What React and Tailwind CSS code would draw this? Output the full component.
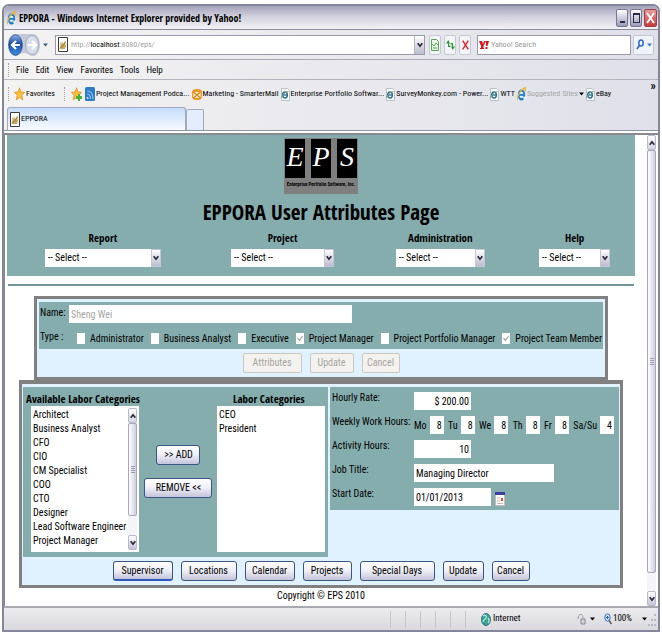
import React from "react";

const BODY = "font-['Roboto_Condensed','Roboto','Liberation_Sans',sans-serif]";
const BOLD = "font-['Open_Sans_Condensed','Roboto_Condensed','Liberation_Sans',sans-serif] font-bold";
const BUTTON_ON =
  "h-[20px] shrink-0 rounded-[3px] border border-[#3c5585] bg-gradient-to-b from-white via-[#eeeef6] to-[#c4c4da] text-center leading-4";
const BUTTON_OFF =
  "h-[20px] shrink-0 rounded-[2px] border border-[#cbc8bf] bg-[#f3f2ef] text-center leading-4 text-[#a5a5a0]";
const FIELD = "h-[18px] bg-white px-[2px]";

/* ---------- icons ---------- */

function IeLogo({ width = 9, height = 14 }) {
  return (
    <svg width={width} height={height} viewBox="0 0 16 16" preserveAspectRatio="none" className="shrink-0" aria-hidden="true">
      <circle cx="8" cy="9" r="5" fill="#e8f4fd" stroke="#1f7fd0" strokeWidth="3" />
      <path d="M4 9h9" stroke="#1f7fd0" strokeWidth="2.2" />
      <path d="M10 11h6v2l-4 1z" fill="#fff" opacity=".8" />
      <path d="M1.500 15C-1 11 7 2 15 1c1 1 0 3-1 4" fill="none" stroke="#e8b92c" strokeWidth="1.800" />
    </svg>
  );
}

function IePage() {
  return (
    <svg width="9" height="13" viewBox="0 0 9 13" className="shrink-0" aria-hidden="true">
      <path d="M.5.5h6l2 2v10h-8z" fill="#fff" stroke="#b9bfcb" />
      <ellipse cx="4" cy="7" rx="2.300" ry="3" fill="none" stroke="#2c6f9c" strokeWidth="1.500" />
      <path d="M2 7h4.500" stroke="#2c6f9c" strokeWidth="1.300" />
      <path d="M.8 10C1 7 4 4 7.500 3.500" fill="none" stroke="#6fa052" />
    </svg>
  );
}

function PageIcon() {
  return (
    <svg width="10" height="15" viewBox="0 0 10 15" className="shrink-0" aria-hidden="true">
      <path d="M.5.5h9v14h-9z" fill="#fff" stroke="#3c3c3c" />
      <path d="M1.500 12l1-4-.5-3 1.500 2 .5-3 1 3 3-4-1 5 1.500-1-1.500 5z" fill="#c9a55e" />
      <path d="M2.500 11l3-3 2-3" stroke="#8a6b33" fill="none" strokeWidth=".8" />
    </svg>
  );
}

function Star({ add }) {
  return (
    <svg width="11" height="14" viewBox="0 0 11 14" className="shrink-0" aria-hidden="true">
      <path d="M5.500.8l1.400 4.200 3.600.3-2.700 3 .9 4.600-3.200-2.600L2.300 12.900l.9-4.600-2.700-3L4.100 5z" fill="#fcc23a" stroke="#e48a1c" strokeWidth=".8" />
      {add && <path d="M5 9h2V7h2v2h2v3H9v2H7v-2H5z" fill="#47b13a" />}
    </svg>
  );
}

function PodcastIcon() {
  return (
    <svg width="10" height="14" viewBox="0 0 10 14" className="shrink-0" aria-hidden="true">
      <rect width="10" height="14" rx="1.500" fill="#2f7cc6" />
      <path d="M2 4c4 0 6 3 6 8M2 7c2.500 0 3.500 2 3.500 5" stroke="#8fc4ee" strokeWidth="1.200" fill="none" />
      <circle cx="2.600" cy="11" r="1" fill="#cfe6fa" />
    </svg>
  );
}

function MailIcon() {
  return (
    <svg width="10" height="13" viewBox="0 0 10 13" className="shrink-0" aria-hidden="true">
      <rect y="1" width="10" height="11" rx="4" fill="#f09a1e" />
      <path d="M1.500 4h7v6h-7z" fill="#fff3da" />
      <path d="M1.500 4L8.500 10M8.500 4L1.500 10" stroke="#d67d12" strokeWidth="1.200" />
    </svg>
  );
}

function Chevron({ up }) {
  return (
    <svg width="6" height="6" viewBox="0 0 6 6" className={up ? "rotate-180" : ""} aria-hidden="true">
      <path d="M.7 1.200L3 4.200 5.300 1.200" stroke="#2a2a3a" strokeWidth="1.700" fill="none" />
    </svg>
  );
}

function Caret({ className = "text-black" }) {
  return (
    <svg width="5" height="4" viewBox="0 0 5 4" className={`shrink-0 ${className}`} aria-hidden="true">
      <path d="M0 .5h5L2.500 3.500z" fill="currentColor" />
    </svg>
  );
}

function NavArrows() {
  return (
    <svg width="32" height="24" viewBox="0 0 32 24" aria-hidden="true">
      <defs>
        <linearGradient id="back" x1="0" y1="0" x2="0" y2="1">
          <stop offset="0" stopColor="#8fb4e8" />
          <stop offset=".45" stopColor="#1d4fa8" />
          <stop offset="1" stopColor="#3f8fe0" />
        </linearGradient>
      </defs>
      <path d="M7 1h18c4 0 7 5 7 11s-3 11-7 11c-4 0-5-3-9-3s-5 3-9 3S0 18 0 12 3 1 7 1z" fill="#c3c9d8" />
      <ellipse cx="7.500" cy="12" rx="6.800" ry="10.300" fill="url(#back)" stroke="#1b3f7c" strokeWidth=".7" />
      <path d="M8 8l-4 4 4 4M4.500 12H12" stroke="#fff" strokeWidth="2.200" fill="none" />
      <ellipse cx="24" cy="12" rx="6.500" ry="9.500" fill="#d9dfea" stroke="#98a3ba" strokeWidth=".8" />
      <path d="M24 8l4 4-4 4M27.500 12H20" stroke="#fff" strokeWidth="2.200" fill="none" />
    </svg>
  );
}

/* ---------- browser frame ---------- */

function TitleBar() {
  return (
    <header className="flex h-[23px] items-center gap-[3px] rounded-t-[5px] bg-gradient-to-b from-[#a5a3bb] via-[#d5d4df] to-[#f2f2f6] pl-[3px] pr-px">
      <IeLogo />
      <h1 className={`${BOLD} flex-1 text-[10px] leading-4`}>EPPORA - Windows Internet Explorer provided by Yahoo!</h1>
      <div className="flex gap-[2px]">
        <button aria-label="Minimize" className="flex h-[18px] w-[12px] items-end justify-center rounded-[2px] border border-[#777795] bg-gradient-to-b from-white to-[#9c9cba] pb-[3px]">
          <span className="h-[2px] w-[5px] bg-[#2b2b48]" />
        </button>
        <button aria-label="Maximize" className="flex h-[18px] w-[12px] items-center justify-center rounded-[2px] border border-[#777795] bg-gradient-to-b from-white to-[#9c9cba]">
          <span className="h-[10px] w-[7px] border border-t-2 border-[#2b2b48]" />
        </button>
        <button aria-label="Close" className="flex h-[18px] w-[13px] items-center justify-center rounded-[2px] border border-[#a04048] bg-gradient-to-b from-[#e59a98] to-[#c8393c]">
          <svg width="9" height="12" viewBox="0 0 9 12" aria-hidden="true">
            <path d="M1 1l7 10M8 1L1 11" stroke="#fff" strokeWidth="1.800" />
          </svg>
        </button>
      </div>
    </header>
  );
}

function ToolButton({ label, children }) {
  return (
    <button aria-label={label} className="flex h-[20px] w-[12px] items-center justify-center rounded-[2px] border border-[#c5c8d2] bg-[#f3f4f8]">
      {children}
    </button>
  );
}

function AddressBar() {
  return (
    <div className="flex h-[30px] items-center border-t border-[#8b8b9b] bg-gradient-to-r from-[#f3f3f2] to-[#e0e0ea] px-[4px]">
      <button aria-label="Back and forward">
        <NavArrows />
      </button>
      <Caret className="ml-[3px] text-[#2f5f7c]" />
      <div className="ml-[7px] flex h-[20px] min-w-0 flex-1 items-center gap-[3px] border border-[#9a9aa8] bg-white pl-[2px]">
        <PageIcon />
        <a href="#address" className="flex-1 text-[8px] leading-4 text-[#a3a3a3]">
          http://<span className="text-black">localhost</span>:8080/eps/
        </a>
        <button aria-label="Address history" className="flex h-full w-[10px] items-center justify-center border-l border-[#b5b5c4] bg-gradient-to-b from-white to-[#bcbcce]">
          <Chevron />
        </button>
      </div>
      <div className="ml-[4px] flex gap-[3px]">
        <ToolButton label="Compatibility view">
          <svg width="8" height="12" viewBox="0 0 8 12" aria-hidden="true">
            <path d="M.5.5h5l2 2v9h-7z" fill="#e7f6e4" stroke="#5aa650" />
            <path d="M1 5l2 2 2-3 2 2M2 9h4" stroke="#5aa650" fill="none" />
          </svg>
        </ToolButton>
        <ToolButton label="Refresh">
          <svg width="9" height="12" viewBox="0 0 9 12" aria-hidden="true">
            <path d="M0 4.500L2.300 1 4 4.500H3v2h1.500V8H2V4.500zM9 7.500L6.700 11 5 7.500h1v-2H4.500V4H7v3.500z" fill="#2e9a35" />
          </svg>
        </ToolButton>
        <ToolButton label="Stop">
          <svg width="7" height="10" viewBox="0 0 7 10" aria-hidden="true">
            <path d="M.7.7l5.600 8.600M6.300.7L.7 9.300" stroke="#d3272c" strokeWidth="1.400" />
          </svg>
        </ToolButton>
      </div>
      <div className="ml-[6px] flex h-[20px] w-[154px] items-center gap-[2px] border border-[#9a9aa8] bg-white pl-px">
        <svg width="10" height="10" viewBox="0 0 10 10" className="shrink-0" aria-hidden="true">
          <path d="M0 1h3l1 3 1-3h2L4.500 6v2H5v1H1V8h1V6z" fill="#d8141c" />
          <path d="M7 1h3L8.500 6H7zM6.500 7h2v2h-2z" fill="#d8141c" />
        </svg>
        <input aria-label="Search" placeholder="Yahoo! Search" className="min-w-0 flex-1 text-[8px] leading-4 placeholder:text-[#9a9a9a]" />
      </div>
      <button aria-label="Run search" className="ml-[2px] flex h-[20px] w-[21px] items-center justify-around rounded-[2px] border border-[#c5c8d2] bg-[#f1f3fb]">
        <svg width="8" height="11" viewBox="0 0 8 11" aria-hidden="true">
          <ellipse cx="5" cy="4" rx="2.200" ry="3" fill="none" stroke="#2d66cf" strokeWidth="1.500" />
          <path d="M3.500 6.500L.8 10" stroke="#2d66cf" strokeWidth="1.700" />
        </svg>
        <Caret className="text-[#3f7bd0]" />
      </button>
    </div>
  );
}

function Grip() {
  return <span className="h-[14px] border-l border-dotted border-[#a0a0a8]" />;
}

function MenuBar() {
  return (
    <nav className="flex h-[20px] items-center gap-[7px] border-t border-[#aaaab4] bg-gradient-to-r from-[#f3f3f2] to-[#e0e0ea] pl-[4px] text-[9px] leading-4">
      <Grip />
      {["File", "Edit", "View", "Favorites", "Tools", "Help"].map((m) => (
        <button key={m}>{m}</button>
      ))}
    </nav>
  );
}

function Bookmark({ icon, children, className = "" }) {
  return (
    <a href="#bookmark" className={`flex shrink-0 items-center gap-px ${className}`}>
      {icon}
      {children}
    </a>
  );
}

function FavoritesBar() {
  return (
    <div className="flex h-[28px] items-start border-t border-[#b4b4bd] bg-gradient-to-r from-[#f3f3f2] to-[#e0e0ea] pl-[4px] text-[8px] leading-4 whitespace-nowrap">
      <div className="flex h-[28px] min-w-0 flex-1 items-center">
        <Grip />
        <button className="ml-[5px] flex items-center gap-px">
          <Star />
          Favorites
        </button>
        <span className="ml-[9px] flex">
          <Grip />
        </span>
        <span className="ml-[6px] flex">
          <Star add />
        </span>
        <div className="ml-[3px] flex gap-[2px]">
          <Bookmark icon={<PodcastIcon />}>Project Management Podca...</Bookmark>
          <Bookmark icon={<MailIcon />}>Marketing - SmarterMail</Bookmark>
          <Bookmark icon={<IePage />}>Enterprise Portfolio Softwar...</Bookmark>
          <Bookmark icon={<IePage />}>SurveyMonkey.com - Power...</Bookmark>
          <Bookmark icon={<IePage />}>WTT</Bookmark>
          <Bookmark className="text-[#a5a5a5]" icon={<IeLogo />}>
            Suggested Sites
            <Caret />
          </Bookmark>
          <Bookmark icon={<IePage />}>eBay</Bookmark>
        </div>
      </div>
      <button aria-label="More favorites" className="pr-[2px] text-[12px] leading-3 font-bold">»</button>
    </div>
  );
}

function TabStrip() {
  return (
    <div className="flex h-[24px] items-end border-b border-[#8f93a8] bg-gradient-to-r from-[#f3f3f2] to-[#e0e0ea] pl-[3px]">
      <button className="flex h-[23px] w-[179px] items-center gap-px rounded-t-[3px] border border-b-0 border-[#a4aabc] bg-gradient-to-b from-[#c5dcfb] to-[#f7fbff] pl-[2px] text-[8px]">
        <PageIcon />
        EPPORA
      </button>
      <button aria-label="New tab" className="h-[21px] w-[18px] rounded-t-[2px] border border-b-0 border-[#a4aabc] bg-[#e3edfb]" />
    </div>
  );
}

function ScrollBar({ thumb }) {
  return (
    <div className="flex w-[9px] shrink-0 flex-col bg-[#f4f4f9]" aria-hidden="true">
      <span className="flex h-[15px] items-center justify-center rounded-[2px] border border-[#b9b9cc] bg-gradient-to-b from-white to-[#d5d5e4]">
        <Chevron up />
      </span>
      <span className={`flex flex-1 flex-col items-center justify-center gap-px rounded-[2px] border border-[#a7a7bf] bg-gradient-to-r from-white to-[#cfcfe0] ${thumb}`}>
        <span className="h-px w-[4px] bg-[#9b9bb4]" />
        <span className="h-px w-[4px] bg-[#9b9bb4]" />
        <span className="h-px w-[4px] bg-[#9b9bb4]" />
        <span className="h-px w-[4px] bg-[#9b9bb4]" />
      </span>
      <span className="mt-auto flex h-[15px] items-center justify-center rounded-[2px] border border-[#b9b9cc] bg-gradient-to-b from-white to-[#c4c4d8]">
        <Chevron />
      </span>
    </div>
  );
}

/* ---------- page content ---------- */

function EpsLogo() {
  return (
    <div className="flex h-[56px] w-[74px] flex-col items-center bg-[#7f7f7f] pt-px">
      <div className="flex w-full justify-between px-px font-['Liberation_Serif',serif] text-[28px] leading-9 text-white italic">
        {["E", "P", "S"].map((c) => (
          <span key={c} className="h-[39px] w-[20px] bg-black text-center">{c}</span>
        ))}
      </div>
      <p className="text-[5px] leading-3 font-bold whitespace-nowrap">Enterprise Portfolio Software, Inc.</p>
    </div>
  );
}

function MenuSelect({ label, width }) {
  return (
    <label className="flex flex-col items-center">
      <span className={`${BOLD} h-[19px] text-[11px] leading-4`}>{label}</span>
      <span className={`relative block ${width}`}>
        <select className="h-[18px] w-full appearance-none bg-white pl-[3px] leading-4">
          <option>-- Select --</option>
        </select>
        <span className="pointer-events-none absolute inset-y-0 right-0 flex w-[10px] items-center justify-center border border-[#c5c5d5] bg-gradient-to-b from-white to-[#bcbcd0]">
          <Chevron />
        </span>
      </span>
    </label>
  );
}

function Check({ label, checked }) {
  return (
    <label className="flex items-center gap-[5px]">
      <span className="relative flex">
        <input type="checkbox" disabled defaultChecked={checked} className="h-[11px] w-[8px] appearance-none bg-white" />
        {checked && (
          <svg width="8" height="11" viewBox="0 0 8 11" className="pointer-events-none absolute inset-0" aria-hidden="true">
            <path d="M1.500 5l2 2.500L6.500 3" stroke="#a9aaa6" strokeWidth="1.300" fill="none" />
          </svg>
        )}
      </span>
      {label}
    </label>
  );
}

function UserPanel() {
  return (
    <section className="w-[574px] border-3 border-[#808080] bg-[#e0f2ff] p-[2px] pt-[3px]">
      <div className="h-[47px] bg-[#86adad] pl-px">
        <div className="flex pt-[3px]">
          <label htmlFor="name" className="w-[29px] leading-4">Name:</label>
          <input id="name" disabled defaultValue="Sheng Wei" className={`${FIELD} w-[283px] text-[#a5a5a5]`} />
        </div>
        <div className="flex whitespace-nowrap">
          <span className="w-[37px] leading-7">Type :</span>
          <div className="mt-[5px] flex h-[20px] min-w-0 flex-1 items-center justify-between pr-px">
            <Check label="Administrator" />
            <Check label="Business Analyst" />
            <Check label="Executive" />
            <Check label="Project Manager" checked />
            <Check label="Project Portfolio Manager" />
            <Check label="Project Team Member" checked />
          </div>
        </div>
      </div>
      <div className="flex h-[26px] items-center justify-center gap-[8px] pt-px">
        <button disabled className={`${BUTTON_OFF} w-[59px]`}>Attributes</button>
        <button disabled className={`${BUTTON_OFF} w-[44px]`}>Update</button>
        <button disabled className={`${BUTTON_OFF} w-[38px]`}>Cancel</button>
      </div>
    </section>
  );
}

const available = ["Architect", "Business Analyst", "CFO", "CIO", "CM Specialist", "COO", "CTO", "Designer", "Lead Software Engineer", "Project Manager"];

function ListBox({ id, items, className }) {
  return (
    <select id={id} multiple size={10} className={`h-[146px] min-w-0 overflow-hidden bg-white px-[2px] py-[3px] [scrollbar-width:none] ${className}`}>
      {items.map((i) => (
        <option key={i} className="h-[14px] min-h-0 p-0 leading-[14px]">{i}</option>
      ))}
    </select>
  );
}

function LaborPanel() {
  return (
    <div className="flex h-[170px] w-[305px] justify-between bg-[#86adad] px-[3px] pt-[4px]">
      <div className="flex flex-col">
        <label htmlFor="available" className={`${BOLD} h-[15px] text-[11px] leading-4`}>Available Labor Categories</label>
        <div className="ml-[5px] flex w-[108px] bg-white">
          <ListBox id="available" items={available} className="flex-1" />
          <div className="flex py-[2px] pr-[2px]">
            <ScrollBar thumb="mb-[19px]" />
          </div>
        </div>
      </div>
      <div className="flex flex-col items-center gap-[13px] pt-[54px]">
        <button className={`${BUTTON_ON} w-[44px]`}>&gt;&gt; ADD</button>
        <button className={`${BUTTON_ON} w-[68px]`}>REMOVE &lt;&lt;</button>
      </div>
      <div className="flex w-[108px] flex-col">
        <label htmlFor="assigned" className={`${BOLD} h-[15px] pl-[16px] text-[11px] leading-4`}>Labor Categories</label>
        <ListBox id="assigned" items={["CEO", "President"]} className="w-full" />
      </div>
    </div>
  );
}

const days = [["Mo", "8"], ["Tu", "8"], ["We", "8"], ["Th", "8"], ["Fr", "8"], ["Sa/Su", "4"]];

function Row({ label, id, children }) {
  return (
    <div className="flex h-[24px]">
      <label htmlFor={id} className="w-[82px] shrink-0 pt-[2px] leading-4">{label}</label>
      <div className="flex min-w-0 flex-1 items-end pb-[2px]">{children}</div>
    </div>
  );
}

function DetailsPanel() {
  return (
    <div className="h-[123px] flex-1 bg-[#86adad] px-[2px] pt-px">
      <Row label="Hourly Rate:" id="rate">
        <input id="rate" defaultValue="$ 200.00" className={`${FIELD} w-[57px] text-right`} />
      </Row>
      <Row label="Weekly Work Hours:" id="Mo">
        <div className="flex flex-1 justify-between pr-[3px]">
          {days.map(([d, h]) => (
            <label key={d} className="flex items-end gap-[3px] leading-4">
              {d}
              <input id={d} defaultValue={h} className={`${FIELD} w-[14px] text-right`} />
            </label>
          ))}
        </div>
      </Row>
      <Row label="Activity Hours:" id="activity">
        <input id="activity" defaultValue="10" className={`${FIELD} w-[57px] text-right`} />
      </Row>
      <Row label="Job Title:" id="job">
        <input id="job" defaultValue="Managing Director" className={`${FIELD} w-[140px]`} />
      </Row>
      <Row label="Start Date:" id="start">
        <input id="start" defaultValue="01/01/2013" className={`${FIELD} w-[77px]`} />
        <button aria-label="Pick a date" className="ml-[4px]">
          <svg width="10" height="14" viewBox="0 0 10 14" aria-hidden="true">
            <path d="M.5.5h9v13h-9z" fill="#fffaf5" stroke="#c7b9c4" />
            <path d="M0 0h10v3H0z" fill="#3d3f9a" />
            <path d="M2 6h3M2 9h3M2 11.500h6" stroke="#c9b6b0" />
            <path d="M6 6h2v3H6z" fill="#d8532e" />
          </svg>
        </button>
      </Row>
    </div>
  );
}

function LaborSection() {
  return (
    <section className="w-[604px] border-3 border-t-4 border-[#808080] bg-[#e0f2ff] px-px pt-[3px]">
      <div className="flex items-start gap-[2px]">
        <LaborPanel />
        <DetailsPanel />
      </div>
      <div className="flex h-[28px] items-center justify-center gap-[8px]">
        <button className={`${BUTTON_ON} w-[60px] border-b-2 border-b-[#2f57c0]`}>Supervisor</button>
        <button className={`${BUTTON_ON} w-[56px]`}>Locations</button>
        <button className={`${BUTTON_ON} w-[50px]`}>Calendar</button>
        <button className={`${BUTTON_ON} w-[49px]`}>Projects</button>
        <button className={`${BUTTON_ON} w-[75px]`}>Special Days</button>
        <button className={`${BUTTON_ON} w-[41px]`}>Update</button>
        <button className={`${BUTTON_ON} w-[38px]`}>Cancel</button>
      </div>
    </section>
  );
}

function PageContent() {
  return (
    <main className="flex-1 pr-[12px] pb-[2px] pl-[2px] text-[10px]">
      <div className="h-[141px] bg-[#86adad] pt-[3px]">
        <div className="flex justify-center">
          <EpsLogo />
        </div>
        <h2 className={`${BOLD} h-[36px] text-center text-[21px] leading-9`}>EPPORA User Attributes Page</h2>
        <div className="grid grid-cols-[192fr_168fr_148fr_121fr]">
          <MenuSelect label="Report" width="w-[116px]" />
          <MenuSelect label="Project" width="w-[103px]" />
          <MenuSelect label="Administration" width="w-[89px]" />
          <MenuSelect label="Help" width="w-[71px]" />
        </div>
      </div>
      <hr className="mx-px mt-[8px] border-t-2 border-[#6f9797]" />
      <div className="mt-[10px] flex flex-col items-center">
        <UserPanel />
        <LaborSection />
        <p className="leading-4">Copyright © EPS 2010</p>
      </div>
    </main>
  );
}

function StatusBar() {
  return (
    <footer className="flex h-[24px] items-center justify-end border-t-2 border-[#a9a9b0] bg-gradient-to-b from-[#ececee] to-[#dadade] pr-[2px] text-[9px]">
      <div className="mr-[15px] flex gap-[14px]" aria-hidden="true">
        {[0, 1, 2, 3, 4, 5].map((i) => (
          <span key={i} className="h-[17px] w-px bg-[#c4c4ca]" />
        ))}
      </div>
      <svg width="10" height="13" viewBox="0 0 10 13" aria-hidden="true">
        <ellipse cx="5" cy="6.500" rx="4.500" ry="6" fill="#3aa394" stroke="#2b6f86" />
        <path d="M2 3c2-2 4 0 3 2S2 7 2 9M7 5c1 1 2 3 0 5" stroke="#bfe8d8" strokeWidth="1.200" fill="none" />
      </svg>
      <span className="ml-[2px] w-[84px]">Internet</span>
      <svg width="9" height="12" viewBox="0 0 9 12" aria-hidden="true">
        <path d="M1 6c0-6 5-6 5-1" stroke="#9a9aa2" fill="none" />
        <path d="M4 6h4v5H4z" fill="#d5d5d8" stroke="#85858c" />
      </svg>
      <span className="mr-[9px] ml-[4px]"><Caret /></span>
      <button className="flex items-center gap-px">
        <svg width="8" height="12" viewBox="0 0 8 12" aria-hidden="true">
          <ellipse cx="3.500" cy="4.500" rx="2.700" ry="3.700" fill="#cfe4fb" stroke="#3b6fc4" />
          <path d="M5 7.500L7.500 11" stroke="#5a5a62" strokeWidth="1.500" />
          <path d="M3.500 3v3M2 4.500h3" stroke="#2a63b8" />
        </svg>
        100%
        <span className="ml-[9px]"><Caret /></span>
      </button>
      <svg width="8" height="14" viewBox="0 0 8 14" className="ml-px" aria-hidden="true">
        <path d="M6 2h2v2H6zM6 7h2v2H6zM6 12h2v2H6zM3 7h2v2H3zM3 12h2v2H3zM0 12h2v2H0z" fill="#b9b9c4" />
      </svg>
    </footer>
  );
}

export default function App() {
  return (
    <div className={`${BODY} bg-white px-[2px] pt-[4px] text-[10px] text-black`}>
      <div className="rounded-t-[7px] border-2 border-[#85859c] bg-white">
        <TitleBar />
        <AddressBar />
        <MenuBar />
        <FavoritesBar />
        <TabStrip />
        <div className="mt-[2px] flex border-t-2 border-l border-[#8a8a92] pr-[2px]">
          <PageContent />
          <ScrollBar thumb="mb-[18px]" />
        </div>
        <StatusBar />
      </div>
    </div>
  );
}
